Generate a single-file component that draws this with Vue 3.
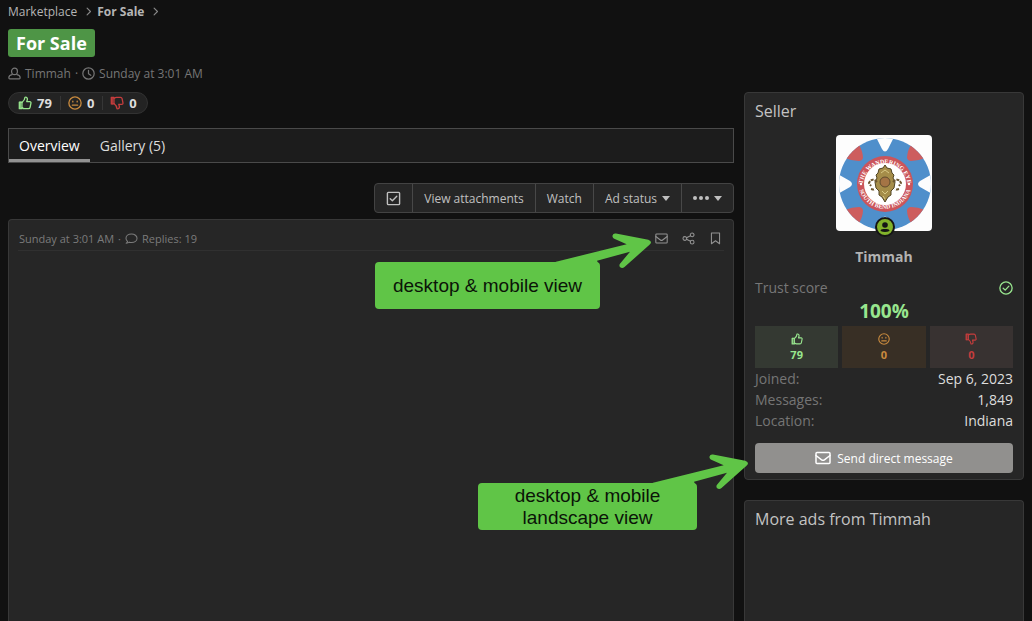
<script setup>
import { h } from 'vue'

const shapes = {
  user: ['M8 1.500a3.600 3.600 0 0 1 3.600 3.600c0 2.400-1.600 4.300-3.600 4.300S4.400 7.500 4.400 5.100A3.600 3.600 0 0 1 8 1.500z', 'M5 9.300c-2.700.4-3.900 1.600-3.900 3.700v.5c0 .7.400 1 1 1h11.800c.6 0 1-.3 1-1V13c0-2.100-1.200-3.300-3.900-3.700'],
  clock: ['M8 1a7 7 0 1 1 0 14A7 7 0 0 1 8 1z', 'M8 4v4.300l2.800 2'],
  up: ['M1.500 7h3v7.500h-3z', 'M2.500 7v7', 'M4.500 7.500C6.500 6 7.800 4.500 8 1.500c1.800-.5 3 .7 2.700 2.500L10 6.500h3.500c1 0 1.500.8 1.300 1.700l-1 4.800c-.2 1-.8 1.500-1.800 1.500H7.500c-1.200 0-2-.5-3-1.200'],
  down: ['M1.500 1.500h3V9h-3z', 'M2.500 2v7', 'M4.500 8.500c2 1.500 3.300 3 3.500 6 1.800.5 3-.7 2.700-2.500L10 9.500h3.500c1 0 1.500-.8 1.300-1.700l-1-4.800c-.2-1-.8-1.500-1.800-1.500H7.500c-1.200 0-2 .5-3 1.200'],
  meh: ['M8 1a7 7 0 1 1 0 14A7 7 0 0 1 8 1z', 'M5 10.500h6', 'M5.500 5.800v1M10.500 5.800v1'],
  comment: ['M3.200 11.700C2 10.800 1.200 9.300 1.200 7.700c0-3 3-5.200 6.800-5.200s6.800 2.200 6.800 5.200-3 5.300-6.800 5.300c-1 0-1.900-.2-2.700-.5-1 .8-2.300 1.200-3.800 1.200 1-.6 1.600-1.200 1.700-2z'],
  mail: ['M2 2.500h12c.6 0 1 .4 1 1v9c0 .6-.4 1-1 1H2c-.6 0-1-.4-1-1v-9c0-.6.4-1 1-1z', 'M1 5.500l5.600 4.300c.9.7 1.900.7 2.800 0L15 5.500'],
  share: ['M12.500 1.200a2.300 2.300 0 1 1 0 4.600 2.300 2.300 0 0 1 0-4.600z', 'M3.500 5.700a2.300 2.300 0 1 1 0 4.600 2.300 2.300 0 0 1 0-4.600z', 'M12.500 10.200a2.300 2.300 0 1 1 0 4.600 2.300 2.300 0 0 1 0-4.600z', 'M5.500 7l5-2.500M5.500 9l5 2.500'],
  bookmark: ['M3 1.200h10v13.300l-5-3.700-5 3.700z'],
  check: ['M2.500 1.500h11c.6 0 1 .4 1 1v11c0 .6-.4 1-1 1h-11c-.6 0-1-.4-1-1v-11c0-.6.4-1 1-1z', 'M4.500 8.200l2.300 2.300L11.500 5.700'],
  verified: ['M8 1a7 7 0 1 1 0 14A7 7 0 0 1 8 1z', 'M4.800 8.200l2.300 2.200 4.200-4.500'],
  chevron: ['M5.500 2l6 6-6 6']
}

const Icon = (props) =>
  h('svg', { class: 'icon', viewBox: '0 0 16 16', 'aria-hidden': 'true' },
    shapes[props.name].map((d) => h('path', { d, fill: 'none', stroke: 'currentColor', 'stroke-linejoin': 'round', 'stroke-linecap': 'round' })))
Icon.props = ['name']

const scores = [
  { kind: 'good', icon: 'up', count: 79 },
  { kind: 'neutral', icon: 'meh', count: 0 },
  { kind: 'bad', icon: 'down', count: 0 }
]
const facts = [
  ['Joined:', 'Sep 6, 2023'],
  ['Messages:', '1,849'],
  ['Location:', 'Indiana']
]
const arrow = 'M2 31 L4 29.700 L74.700 12.300 L62.300 6.800 C59 5 60.500 0.800 64 1.500 L96.300 7.700 Q101 9.500 97.500 12.800 L72.500 35 C69.500 37.500 66 34.500 68 31.800 L78 19.700 L45 28.800 L46 31 Z'
</script>

<template>
  <div class="page">
    <header class="top">
      <nav class="crumbs" aria-label="Breadcrumb">
        <a href="#">Marketplace</a><Icon name="chevron" />
        <a href="#" class="current">For Sale</a><Icon name="chevron" />
      </nav>
      <h1><span class="label">For Sale</span></h1>
      <div class="byline">
        <Icon name="user" /><a href="#">Timmah</a><span>·</span><Icon name="clock" /><a href="#">Sunday at 3:01 AM</a>
      </div>
    </header>

    <div class="columns">
      <main class="main">
        <div class="pill">
          <span v-for="s in scores" :key="s.kind" class="pill-item"><Icon :name="s.icon" :class="s.kind" />{{ s.count }}</span>
        </div>
        <nav class="tabs">
          <a href="#" class="active">Overview</a>
          <a href="#">Gallery (5)</a>
        </nav>
        <div class="toolbar">
          <div class="group">
            <button type="button" aria-label="Select"><Icon name="check" /></button>
            <button type="button">View attachments</button>
            <button type="button">Watch</button>
            <button type="button">Ad status<i class="caret"></i></button>
            <button type="button" aria-label="More options"><i class="dots"><b></b><b></b><b></b></i><i class="caret"></i></button>
          </div>
        </div>
        <article class="card post">
          <div class="post-head">
            <div class="meta"><a href="#">Sunday at 3:01 AM</a><span>·</span><Icon name="comment" /><span>Replies: 19</span></div>
            <div class="actions">
              <button type="button" aria-label="Send direct message"><Icon name="mail" /></button>
              <button type="button" aria-label="Share"><Icon name="share" /></button>
              <button type="button" aria-label="Bookmark"><Icon name="bookmark" /></button>
            </div>
          </div>
        </article>
      </main>

      <aside class="side">
        <section class="card seller">
          <h2>Seller</h2>
          <a href="#" class="avatar" aria-label="Timmah">
            <svg class="chip" viewBox="0 0 96 96">
              <defs>
                <clipPath id="disc"><circle cx="49" cy="49" r="46" /></clipPath>
                <path id="arcTop" d="M26.500 51a22.500 22.500 0 1 1 45 0" />
                <path id="arcBottom" d="M22.200 47a26.800 26.800 0 1 0 53.600 0" />
              </defs>
              <rect width="96" height="96" fill="#fdfdfd" />
              <g clip-path="url(#disc)">
                <rect width="98" height="98" fill="#4f8fcb" />
                <g fill="#cd5d5e">
                  <path d="M9 23L22 8Q27 16 27 23Q26 26 23 26Q16 26 9 23Z" />
                  <path d="M89 23L76 8Q71 16 71 23Q72 26 75 26Q82 26 89 23Z" />
                  <path d="M9 75L22 90Q27 82 27 75Q26 72 23 72Q16 72 9 75Z" />
                  <path d="M89 75L76 90Q71 82 71 75Q72 72 75 72Q82 72 89 75Z" />
                </g>
                <path fill="#fdfdfd" d="M39 0L46 14Q49 19 52 14L59 0ZM39 98L46 84Q49 79 52 84L59 98ZM0 38L14 46Q18 49 14 52L0 60ZM98 38L84 46Q80 49 84 52L98 60Z" />
              </g>
              <circle cx="49" cy="49" r="28" fill="#cb555b" />
              <circle cx="49" cy="49" r="21" fill="#fff" />
              <g class="ring">
                <text><textPath href="#arcTop" startOffset="50%">THE WANDERING EYE</textPath></text>
                <text><textPath href="#arcBottom" startOffset="50%">SOUTH BEND INDIANA</textPath></text>
              </g>
              <circle cx="25" cy="49" r="1.200" fill="#fff" /><circle cx="73" cy="49" r="1.200" fill="#fff" />
              <path fill="#a58d49" stroke="#514524" stroke-width="1" d="M49 30l2 3 4 1 1 4 2 2-1 3 2 4-1 6-3 3 0 4-3 2-3 5-3-5-3-2 0-4-3-3-1-6 2-4-1-3 2-2 1-4 4-1z" />
              <path fill="none" stroke="#6c5730" stroke-width="2" stroke-dasharray="3 1" d="M41 47q-5-5-8 1l2 3M57 47q5-5 8 1l-2 3M35 54l4 1M63 54l-4 1" />
              <circle cx="49" cy="47" r="5" fill="#a47445" stroke="#604b2e" />
              <path fill="none" stroke="#d9c986" d="M45 38l4-3 4 3M46 56l3 3 3-3M47 61l2 3" />
            </svg>
            <svg class="online" viewBox="0 0 20 20">
              <circle cx="10" cy="10" r="9" fill="#82b32b" stroke="#151515" stroke-width="2" />
              <circle cx="10" cy="8" r="2.800" fill="#151515" /><path fill="#151515" d="M5.500 14q0-2 3-2h3q3 0 3 2-4.500 2-9 0z" />
            </svg>
          </a>
          <a href="#" class="name">Timmah</a>
          <div class="trust"><span>Trust score</span><Icon name="verified" class="good" /></div>
          <div class="percent good">100%</div>
          <div class="scores">
            <div v-for="s in scores" :key="s.kind" :class="['score', s.kind]"><Icon :name="s.icon" /><span>{{ s.count }}</span></div>
          </div>
          <dl>
            <div v-for="f in facts" :key="f[0]"><dt>{{ f[0] }}</dt><dd>{{ f[1] }}</dd></div>
          </dl>
          <button type="button" class="send"><Icon name="mail" />Send direct message</button>
        </section>
        <section class="card more"><h2>More ads from Timmah</h2></section>
      </aside>
    </div>

    <div class="callout first">desktop &amp; mobile view<svg viewBox="0 0 100 36"><path :d="arrow" /></svg></div>
    <div class="callout second">desktop &amp; mobile<br />landscape view<svg viewBox="0 0 100 36"><path :d="arrow" /></svg></div>
  </div>
</template>

<style>
body { background: #111; overflow-x: hidden; }
</style>

<style scoped>
* { box-sizing: border-box; }
.page {
  position: relative;
  display: flex;
  flex-direction: column;
  min-height: 100vh;
  padding: 0 8px;
  background: #111;
  color: #ddd;
  font: 14px/21px "Open Sans", "Noto Sans", sans-serif;
}
a { color: inherit; text-decoration: none; }
h1, h2, dl, dd { margin: 0; font-weight: 400; }
button { font: inherit; color: inherit; background: none; border: 0; padding: 0; }
.icon { width: 14px; height: 14px; flex: none; stroke-width: 1.5px; }
.good { color: #98e68e; }
.neutral { color: #c88a3e; }
.bad { color: #c53d3d; }

.top { padding-bottom: 8px; }
.crumbs { display: flex; align-items: center; height: 23px; font-size: 12px; color: #b5b5b5; }
.crumbs .icon { width: 9px; height: 9px; margin: 0 4px 0 7px; color: #888; stroke-width: 2px; }
.crumbs .current { font-weight: 700; }
h1 { display: flex; margin-top: 6px; }
.label { padding: 1px 8px 0; border-radius: 3px; background: #4e9546; color: #fff; font-size: 18px; line-height: 27px; font-weight: 700; }
.byline { display: flex; align-items: center; gap: 4px; margin-top: 6px; font-size: 12px; color: #767676; }
.byline .icon { width: 13px; height: 13px; }

.columns { flex: 1; display: flex; gap: 10px; }
.main { flex: 1; min-width: 0; display: flex; flex-direction: column; align-items: stretch; }
.pill { align-self: flex-start; display: flex; align-items: center; height: 22px; padding: 0 2px; border: 1px solid #323232; border-radius: 11px; background: #232323; font-size: 13px; font-weight: 700; color: #ddd; }
.pill-item { display: flex; align-items: center; gap: 5px; padding: 0 8px 0 7px; line-height: 12px; }
.pill-item + .pill-item { border-left: 1px solid #363636; }
.tabs { display: flex; height: 35px; margin-top: 14px; border: 1px solid #4a4a4a; background: #1c1c1c; color: #ddd; }
.tabs a { padding: 0 10px; line-height: 33px; border-bottom: 3px solid transparent; }
.tabs .active { color: #fff; border-color: #929292; }
.toolbar { display: flex; justify-content: flex-end; margin: 20px 0 6px; }
.group { display: flex; height: 30px; border: 1px solid #434343; border-radius: 4px; background: #262626; color: #c0c0c0; font-size: 12px; }
.group button { display: flex; align-items: center; padding: 0 11px; }
.group button + button { border-left: 1px solid #484848; }
.group .icon { width: 15px; height: 15px; }
.caret { margin-left: 5px; border: 4px solid transparent; border-top: 5px solid currentColor; border-bottom: 0; }
.dots { display: flex; gap: 2px; }
.dots b { width: 4px; height: 4px; border-radius: 50%; background: currentColor; }

.card { border: 1px solid #383838; border-radius: 4px; background: #262626; }
.post { flex: 1; padding: 8px 9px; border-bottom: 0; border-radius: 4px 4px 0 0; }
.post-head { display: flex; justify-content: space-between; align-items: center; height: 23px; padding-bottom: 2px; border-bottom: 1px solid #303030; font-size: 11px; color: #7b7b7b; }
.meta { display: flex; align-items: center; gap: 4px; padding-left: 1px; }
.meta .icon { width: 13px; height: 13px; stroke-width: 1.3px; }
.actions { display: flex; gap: 14px; padding-right: 2px; }
.actions .icon { display: block; width: 13px; height: 13px; stroke-width: 1.3px; color: #929292; }

.side { width: 280px; flex: none; display: flex; flex-direction: column; gap: 20px; }
h2 { font-size: 16px; line-height: 23px; color: #c3c3c3; }
.seller { padding: 7px 10px 6px; display: flex; flex-direction: column; }
.more { flex: 1; padding: 7px 10px; border-bottom: 0; border-radius: 4px 4px 0 0; }
.avatar { position: relative; align-self: center; width: 96px; height: 96px; margin-top: 12px; }
.chip { display: block; width: 96px; height: 96px; border-radius: 4px; }
.ring text { fill: #fff; font: 700 6px "Liberation Serif", serif; text-anchor: middle; }
.online { position: absolute; left: 39px; bottom: -6px; width: 20px; height: 20px; }
.name { align-self: center; margin-top: 14px; line-height: 24px; font-weight: 700; color: #b2b2b2; }
.trust { display: flex; justify-content: space-between; align-items: center; margin-top: 8px; color: #777; }
.percent { text-align: center; font-size: 19px; line-height: 24px; font-weight: 700; margin-top: 1px; }
.scores { display: flex; gap: 4px; margin-top: 3px; }
.score { flex: 1; display: flex; flex-direction: column; align-items: center; height: 42px; padding-top: 7px; font-size: 11px; line-height: 17px; font-weight: 700; }
.score .icon { width: 12px; height: 12px; }
.score span { margin-top: 1px; }
.score.good { background: #343932; }
.score.neutral { background: #382f25; }
.score.bad { background: #383231; }
dl > div { display: flex; justify-content: space-between; }
dt { color: #757575; }
.send { display: flex; align-items: center; justify-content: center; gap: 6px; height: 30px; margin-top: 12px; border-radius: 4px; background: #91908e; color: #fff; font-size: 12px; }
.send .icon { width: 16px; height: 16px; stroke-width: 1.5px; }

.callout { position: absolute; display: grid; place-content: center; height: 47px; border-radius: 4px; background: #60c547; color: #0b1408; font: 19px/22px "Liberation Sans", Arial, sans-serif; text-align: center; }
.callout svg { position: absolute; right: -52px; top: -30px; width: 100px; height: 36px; fill: #60c547; }
.first { top: 262px; right: 432px; width: 225px; }
.second { top: 483px; right: 335px; width: 219px; }
</style>
